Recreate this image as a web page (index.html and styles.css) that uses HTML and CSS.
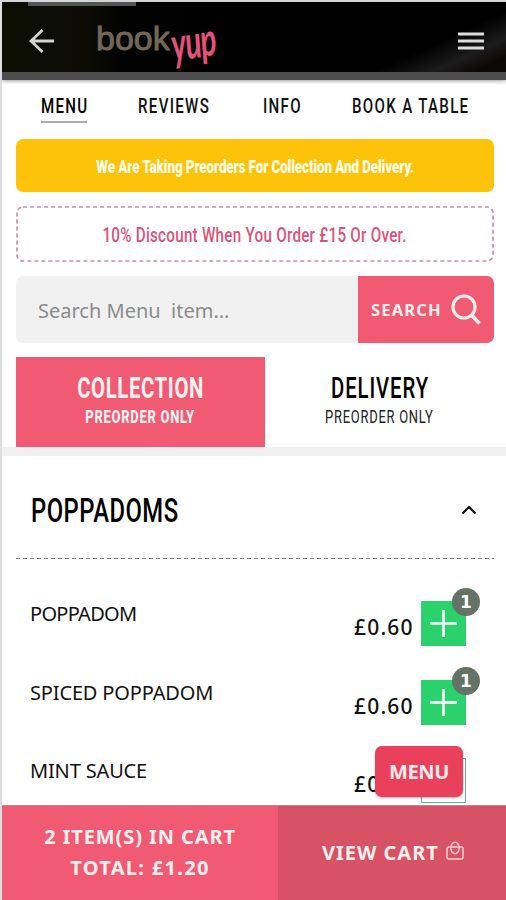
FILE: index.html
```
<!DOCTYPE html>
<html lang="en">
<head>
<meta charset="utf-8">
<title>bookyup – Menu</title>
<link rel="stylesheet" href="styles.css">
</head>
<body>
<div class="app">
  <header class="topbar">
    <svg class="back" width="26" height="26" viewBox="0 0 26 26"><path d="M25 13H2M13.500 2L2 13l11.500 11" fill="none" stroke="#d5d5d0" stroke-width="2.800"/></svg>
    <div class="logo"><span class="logo-book">book</span><span class="logo-yup">yup</span></div>
    <svg class="burger" width="26" height="18" viewBox="0 0 26 18"><path d="M0 2h26M0 9h26M0 16h26" stroke="#dcdcdc" stroke-width="3"/></svg>
  </header>
  <nav class="tabs">
    <a class="tab active"><span>MENU</span></a>
    <a class="tab"><span>REVIEWS</span></a>
    <a class="tab"><span>INFO</span></a>
    <a class="tab"><span>BOOK A TABLE</span></a>
  </nav>
  <section class="top">
    <div class="notice"><span>We Are Taking Preorders For Collection And Delivery.</span></div>
    <div class="discount"><svg class="dashes" width="478" height="56"><rect x="1" y="1" width="476" height="54" rx="6" fill="none" stroke="#cf8ba0" stroke-width="1.700" stroke-dasharray="4 3"/></svg><span>10% Discount When You Order £15 Or Over.</span></div>
    <div class="search">
      <div class="field"><span>Search Menu&nbsp; item...</span></div>
      <div class="go"><span>SEARCH</span><svg width="31" height="31" viewBox="0 0 31 31"><circle cx="14" cy="13" r="11" fill="none" stroke="#fff0ec" stroke-width="3.200"/><path d="M21.500 21l8 8.500" stroke="#fff0ec" stroke-width="3.600"/></svg></div>
    </div>
    <div class="modes">
      <div class="mode on"><span class="big">COLLECTION</span><span class="small">PREORDER ONLY</span></div>
      <div class="mode"><span class="big">DELIVERY</span><span class="small">PREORDER ONLY</span></div>
    </div>
  </section>
  <section class="list">
    <div class="heading"><h2>POPPADOMS</h2><svg width="16" height="10" viewBox="0 0 16 10"><path d="M1.500 8.500L8 2l6.500 6.500" fill="none" stroke="#111" stroke-width="2.200"/></svg></div>
    <div class="item"><span class="name tight">POPPADOM</span><span class="price">£0.60</span><div class="add"><svg width="27" height="27" viewBox="0 0 27 27"><path d="M13.500 0v27M0 13.500h27" stroke="#fff" stroke-width="2.600"/></svg><b>1</b></div></div>
    <div class="item"><span class="name">SPICED POPPADOM</span><span class="price">£0.60</span><div class="add"><svg width="27" height="27" viewBox="0 0 27 27"><path d="M13.500 0v27M0 13.500h27" stroke="#fff" stroke-width="2.600"/></svg><b>1</b></div></div>
    <div class="item"><span class="name">MINT SAUCE</span><span class="price">£0</span><div class="add outline"></div></div>
  </section>
  <a class="menu-btn">MENU</a>
  <footer class="cart">
    <div class="summary"><span>2 ITEM(S) IN CART</span><span class="total">TOTAL: £1.20</span></div>
    <div class="view"><span>VIEW CART</span><svg width="18" height="19" viewBox="0 0 18 19"><rect x="1" y="6" width="16" height="12" rx="2" fill="none" stroke="#fbcdd0" stroke-width="1.500"/><ellipse cx="9" cy="7" rx="4.200" ry="5.700" fill="none" stroke="#fbcdd0" stroke-width="1.500"/></svg></div>
  </footer>
</div>
</body>
</html>
```
FILE: styles.css
```
* { box-sizing: border-box; }
body { margin: 0; background: #fff; font-family: "Noto Sans", sans-serif; color: #111; }
span, h2 { white-space: nowrap; flex: none; }
.app { position: relative; width: 506px; height: 900px; overflow: hidden; border-left: 2px solid #dcdde0; border-top: 2px solid #d4d5d6; display: flex; flex-direction: column; }

.topbar { height: 78px; flex: none; display: flex; align-items: center; padding: 0 22px 0 27px; border-bottom: 8px solid #4d4d4d;
  background: linear-gradient(#555, #555) 26px 0 / 108px 4px no-repeat, linear-gradient(155deg, transparent 60%, #1c1c1c 78%, #0c0806 90%) 100% 0 / 180px 70px no-repeat, linear-gradient(90deg, #0c0e03 0, #0c0c05 17%, #020202 24%, #000 100%);
  background-clip: padding-box; box-shadow: 0 1px 4px rgba(0,0,0,.4); }
.back { margin-top: 8px; flex: none; }
.logo { display: flex; align-items: center; margin-left: 41px; width: 125px; height: 50px; margin-top: 8px; }
.logo-book { width: 75px; font: 34px/50px "Liberation Sans", sans-serif; color: #736857; -webkit-text-stroke: .9px #736857; position: relative; top: -3px; }
.logo-yup { font: italic 700 34px/50px Lato, sans-serif; color: #e3527a; transform: translateY(3px) rotate(-9deg) scale(.88, 1.35); transform-origin: left center; letter-spacing: -1px; }
.burger { margin-left: auto; margin-top: 8px; flex: none; }

.tabs { height: 59px; flex: none; display: grid; grid-template-columns: 97px 125px 89px 120px; padding: 12px 0 0 39px; font: 500 20.500px/28px Roboto, sans-serif; letter-spacing: 1.800px; }
.tab { height: 31px; }
.tab span { display: inline-block; transform: scaleX(.735); transform-origin: left; }
.active { width: 46px; border-bottom: 2px solid #aaa; color: #000; }

.top { padding: 0 12px 0 14px; height: 308px; flex: none; }
.notice, .discount { display: flex; align-items: center; justify-content: center; border-radius: 7px; font-family: Roboto, sans-serif; }
.notice { height: 53px; background: #fdc20a; color: #fffbe9; font-weight: 900; font-size: 18.500px; letter-spacing: -.150px; padding-top: 3px; }
.notice span { transform: scaleX(.728); }
.discount { position: relative; height: 56px; margin-top: 14px; color: #dc5378; font-weight: 500; font-size: 20.500px; letter-spacing: .370px; padding-top: 1px; }
.discount span { transform: scaleX(.74); }
.dashes { position: absolute; left: 0; top: 0; }
.search { display: flex; height: 67px; margin-top: 14px; border-radius: 7px; overflow: hidden; }
.field { width: 342px; background: #f1f1f1; padding: 2px 0 0 22px; display: flex; align-items: center; font-size: 20px; color: #8b8b8b; }
.go { flex: 1; background: #f05a73; color: #fff0ec; display: flex; align-items: center; justify-content: space-between; padding: 0 13px; font-weight: 700; font-size: 16.500px; letter-spacing: 1.150px; }
.modes { display: flex; margin-top: 14px; height: 90px; font-family: Roboto, sans-serif; }
.mode { width: 249px; padding-top: 15px; display: flex; flex-direction: column; align-items: center; }
.mode + .mode { width: 229px; }
.mode .big { transform: scaleX(.7); }
.mode .small { transform: scaleX(.74); }
.big { font-size: 29px; line-height: 33px; letter-spacing: 1.300px; font-weight: 500; color: #000; }
.small { font-size: 17.500px; line-height: 25px; letter-spacing: 1px; color: #222; }
.on { background: #f05a73; }
.on .big { font-weight: 700; letter-spacing: .900px; color: #fff2f0; }
.on .small { font-weight: 800; color: #fff2f0; }

.list { border-top: 9px solid #f0f0f1; padding: 0 12px 0 14px; }
.heading { height: 103px; display: flex; justify-content: space-between; align-items: center; padding: 5px 17px 0 15px; background: repeating-linear-gradient(90deg, #777 0 4px, transparent 4px 7px) 0 100% / 100% 1.500px no-repeat; }
h2 { margin: 0; font: 500 34px/40px Roboto, sans-serif; letter-spacing: .700px; color: #000; transform: scaleX(.7); transform-origin: left; }
.item { display: flex; height: 78.500px; align-items: flex-start; padding-left: 14px; position: relative; top: 42px; }
.name { width: 324px; font-size: 20px; line-height: 26px; letter-spacing: -.150px; }
.tight { letter-spacing: -.700px; }
.price { width: 67px; font-size: 21px; line-height: 26px; font-weight: 500; letter-spacing: 1.200px; padding-top: 13px; }
.add { position: relative; width: 45px; height: 45px; background: #2ad16c; display: flex; align-items: center; justify-content: center; }
.outline { background: none; border: 1px solid #58b691; }
.add b { position: absolute; right: -14px; top: -13px; width: 28px; height: 28px; border-radius: 50%; background: #647366; color: #fff; font: 700 17px/29px "DejaVu Sans", sans-serif; text-align: center; }

.menu-btn { position: absolute; left: 373px; top: 744px; width: 88px; height: 51px; border-radius: 7px; background: #e9415b; color: #ffecec; font-weight: 700; font-size: 20px; line-height: 51px; text-align: center; letter-spacing: -.400px; box-shadow: 0 1px 2px rgba(0,0,0,.3); }
.cart { position: absolute; left: 0; right: 0; bottom: 0; height: 95px; display: flex; color: #fff0ee; font-weight: 700; font-size: 20px; line-height: 31px; border-top: 1px solid #c9808c; }
.summary { width: 276px; background: #f05a73; display: flex; flex-direction: column; align-items: center; padding-top: 15px; letter-spacing: .900px; }
.total { letter-spacing: 1.300px; }
.view { flex: 1; background: #d75264; display: flex; align-items: flex-start; padding: 31px 0 0 44px; letter-spacing: 1px; }
.view svg { margin: 4px 0 0 7px; }
```
